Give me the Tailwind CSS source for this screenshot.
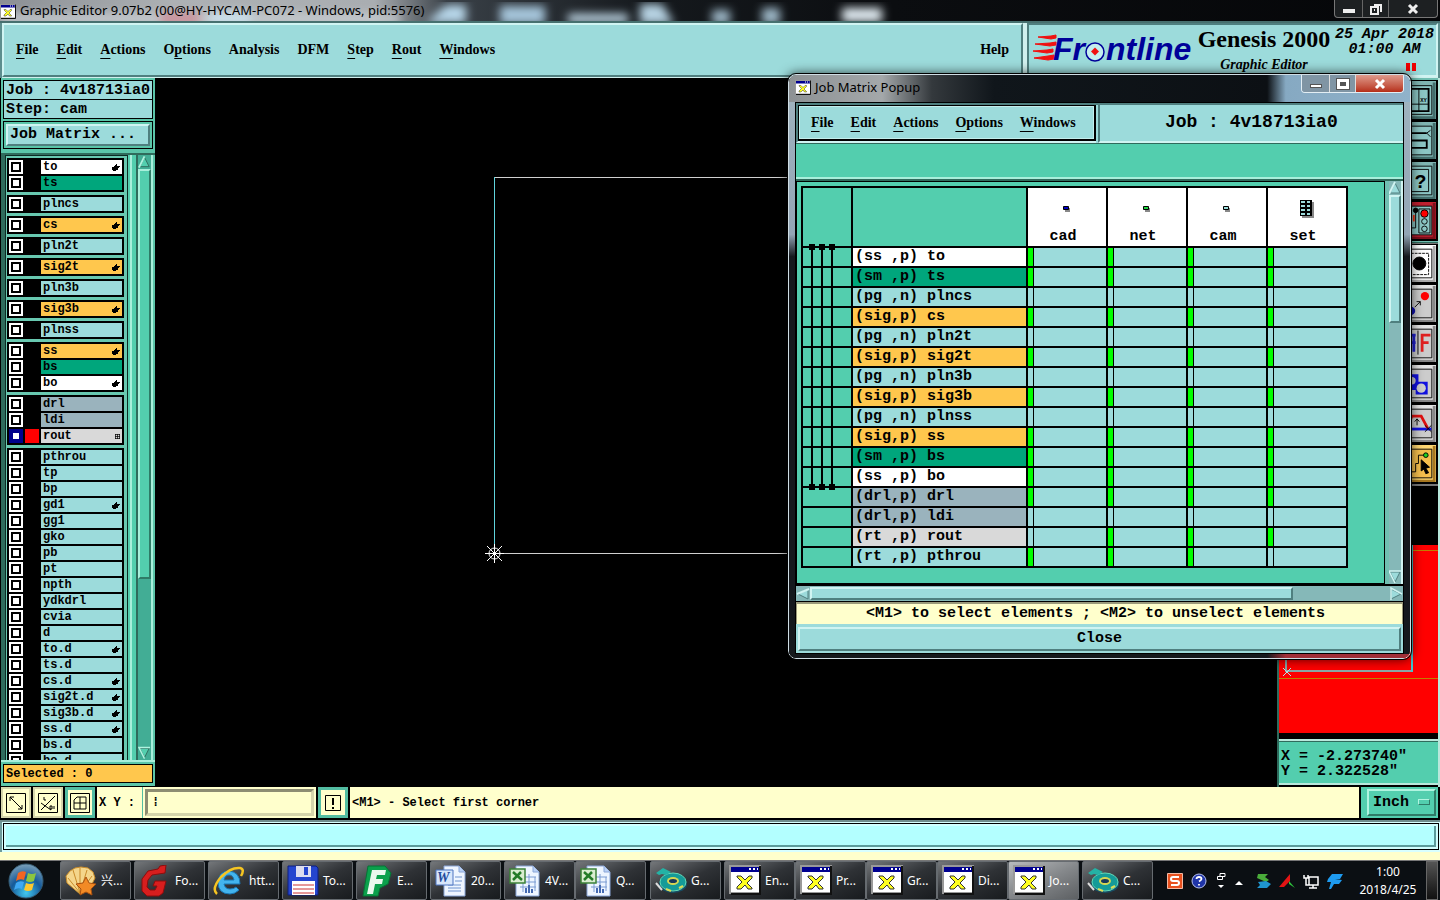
<!DOCTYPE html>
<html lang="en">
  <head>
    <meta charset="UTF-8" />
    <meta name="viewport" content="width=device-width, initial-scale=1.0" />
    <script src="https://cdn.jsdelivr.net/npm/@tailwindcss/browser@4"></script>
    <title>Graphic Editor</title>
  </head>
  <body
    class="relative flex h-screen flex-col overflow-hidden bg-black font-['Liberation_Mono',monospace] font-bold text-black"
  >
    <!-- shared icons -->
    <svg class="hidden">
      <symbol id="xwin" viewBox="0 0 32 32">
        <path d="M1 1h30v27H1z" fill="#fff" stroke="#999" stroke-width="2" />
        <path d="M31 1v28H2" fill="none" stroke="#111" stroke-width="2" />
        <path d="M2 2h28v5H2z" fill="#000090" />
        <path d="M20 3h2v2h-2zM24 3h2v2h-2zM28 3h1v2h-1z" fill="#fff" />
        <path
          d="M8 11h4l4 4 4-4h3v2l-5 5 5 5v1h-4l-3-4-4 4H8v-2l5-5-5-5z"
          fill="#ffff20"
          stroke="#333"
        />
      </symbol>
      <symbol id="hand" viewBox="0 0 8 7">
        <path d="M4 0h1v2h3v1H7v1H6v2H4v1H1V6H0V3h2V2h1V1h1z" />
      </symbol>
      <symbol id="word" viewBox="0 0 32 32">
        <path d="M9 1h15l6 6v24H9z" fill="#eef5ff" stroke="#8aa6d8" />
        <path d="M24 1v6h6" fill="#b9d0f5" stroke="#8aa6d8" />
        <path d="M13 20h13M13 23h13M13 26h13M20 12h7M20 16h7" stroke="#6f93cf" />
        <path d="M1 5h17v15H1z" fill="#d7e6fb" stroke="#4d75c1" />
        <text x="2" y="17" font-size="14" font-style="italic" font-weight="700" font-family="Liberation Serif, serif" fill="#234a9b">W</text>
      </symbol>
      <symbol id="excel" viewBox="0 0 32 32">
        <path d="M7 1h17l6 6v24H7z" fill="#eef5ff" stroke="#8aa6d8" />
        <path d="M24 1v6h6" fill="#b9d0f5" stroke="#8aa6d8" />
        <path d="M11 12h16M11 17h16M11 22h16M14 9v18M20 9v18M26 12v14" stroke="#7b9bd2" />
        <path d="M17 28v-5M20 28v-8M23 28v-4" stroke="#4469b0" stroke-width="2" />
        <path d="M1 4h15v14H1z" fill="#d9edd0" stroke="#3b8137" stroke-width="1.5" />
        <path d="M4 7l9 8M12 7l-8 8" stroke="#237b27" stroke-width="2.5" />
      </symbol>
      <symbol id="disc" viewBox="0 0 32 32">
        <ellipse cx="18" cy="19" rx="14" ry="9" fill="#174c63" />
        <ellipse cx="18" cy="17" rx="13" ry="9" fill="#159b98" stroke="#64dbb9" />
        <ellipse cx="18" cy="16" rx="6" ry="4" fill="#d6d653" />
        <ellipse cx="18" cy="16" rx="4" ry="2" fill="#18375a" />
        <path d="M1 8l7-5 8 4-5 3-4-1-3 1z" fill="#24b2a5" />
        <path d="M1 18l6 7" stroke="#ddd" stroke-width="2" />
        <path d="M11 24l5 2M24 23l4-2" stroke="#dddc58" stroke-width="2" />
      </symbol>
    </svg>

    <!-- window title -->
    <div
      class="relative flex h-[23px] shrink-0 items-start justify-between overflow-hidden border-b-2 border-[#47706f] bg-[linear-gradient(90deg,#8b8f94,#adb1b4_12%,#a9adb1_26%,#3a4148_31%,#15191d_45%,#0b0d10_62%,#050608)]"
    >
      <svg class="absolute inset-0 h-full w-full">
        <defs>
          <filter id="soft"><feGaussianBlur stdDeviation="5" /></filter>
        </defs>
        <g filter="url(#soft)">
          <path d="M0 14h400v9H0z" fill="#c9ced2" />
          <path d="M160 14h40v9h-40z" fill="#d78c98" />
          <path d="M210 12h40v12h-40z" fill="#cfe6f2" />
          <path d="M426 23l20-18h20v18z" fill="#b7d7ea" />
          <path d="M500 6h45v18h-45z" fill="#a5c5da" />
          <path d="M568 14h60v9h-60z" fill="#c3dceb" />
          <path d="M640 4h22l12 20h-34z" fill="#b6d2e2" />
          <path d="M712 10h18v14h-18zM762 8h18v16h-18z" fill="#9fb9c9" />
          <path d="M842 8h40v14h-40z" fill="#e3eef4" />
        </g>
      </svg>
      <div class="relative flex items-center gap-1 font-['Noto_Sans',sans-serif] text-[13px] font-normal">
        <svg class="mt-1 h-4 w-4"><use href="#xwin" /></svg>
        <h1 class="leading-5">Graphic Editor 9.07b2 (00@HY-HYCAM-PC072 - Windows, pid:5576)</h1>
      </div>
      <div class="relative mr-0.5 flex h-[18px] divide-x divide-[#666] rounded-b border border-t-0 border-[#777] bg-[#1d2022]">
        <button aria-label="Minimize" class="flex w-7 items-center justify-center pt-1">
          <span class="h-1 w-3 bg-[#eee]"></span>
        </button>
        <button aria-label="Restore" class="flex w-[26px] items-center justify-center">
          <svg class="h-3 w-3" fill="none" stroke="#eee" stroke-width="2"><path d="M4 2h7v7M1 4h7v7H1zM4 7h1" /></svg>
        </button>
        <button aria-label="Close window" class="flex w-12 items-center justify-center">
          <svg class="h-3 w-3" stroke="#eee" stroke-width="3"><path d="M2 2l8 8M10 2l-8 8" /></svg>
        </button>
      </div>
    </div>

    <!-- menu bar and product panel -->
    <header class="flex h-[55px] shrink-0 gap-1 border-x-2 border-[#5c8d8d] bg-[#d0f0ee] pb-px font-['Liberation_Serif',serif]">
      <nav
        class="flex flex-1 items-center gap-[18px] border-2 border-t-[#d0f4f2] border-r-[#4f7f7f] border-b-[#4f7f7f] border-l-[#d0f4f2] bg-[#9cdbdb] pr-3 pl-3 text-sm [&_u]:underline-offset-4"
      >
        <button><u>F</u>ile</button>
        <button><u>E</u>dit</button>
        <button><u>A</u>ctions</button>
        <button>O<u>p</u>tions</button>
        <button>Analysis</button>
        <button>DFM</button>
        <button><u>S</u>tep</button>
        <button><u>R</u>out</button>
        <button><u>W</u>indows</button>
        <button class="ml-auto">Help</button>
      </nav>
      <div
        class="flex w-[411px] items-start border-2 border-t-[#4f7f7f] border-r-[#d0f4f2] border-b-[#d0f4f2] border-l-[#4f7f7f] bg-[#9cdbdb]"
      >
        <svg class="mt-2 ml-1 h-9 w-[162px] shrink-0" viewBox="0 0 162 36">
          <path
            d="M5 4l13-1 5-1v3l-5 1zM2 11l15-1 6-1v3l-6 1zM0 18l14-1 6-1v3l-6 1zM1 25l14-2 6-1v4l-6 1z"
            fill="#f01010"
            stroke="#f01010"
          />
          <g font-family="Liberation Sans, sans-serif" font-size="32" font-weight="700" font-style="italic" fill="#000099">
            <text x="20" y="27">Fr</text>
            <text x="73" y="27">ntline</text>
          </g>
          <circle cx="62" cy="19" r="9" fill="#c4eeee" stroke="#000099" stroke-width="1.5" />
          <path d="M62 14.500l4 4-4 4-4-4z" fill="#f01010" />
        </svg>
        <div class="w-[138px] shrink-0 text-center">
          <p class="text-2xl leading-7 whitespace-nowrap">Genesis 2000</p>
          <p class="pt-0.5 text-sm italic">Graphic Editor</p>
        </div>
        <div class="flex-1 pt-0.5 text-center font-['Liberation_Mono',monospace] text-[15px] leading-[15px] whitespace-nowrap italic">
          <p>25 Apr 2018</p>
          <p>01:00 AM</p>
          <div class="mr-5 flex justify-end gap-0.5 pt-1.5">
            <span class="h-2 w-1 bg-[#f00000]"></span>
            <span class="h-2 w-1 bg-[#f00000]"></span>
          </div>
        </div>
      </div>
    </header>

    <main class="flex min-h-0 flex-1">
      <!-- layer list -->
      <aside class="flex w-[155px] shrink-0 flex-col border-l border-black bg-[#5bc5a9] pt-0.5">
        <p class="mx-0.5 h-5 border border-black bg-[#9cdbdb] pl-0.5 text-[15px] leading-5 whitespace-pre">Job : 4v18713ia0</p>
        <p class="mx-0.5 h-[19px] border border-t-0 border-black bg-[#9cdbdb] pl-0.5 text-[15px] leading-5">Step: cam</p>
        <div class="mx-0.5 mt-0.5 flex h-7 border border-black p-0.5">
          <button
            class="w-full border-2 border-t-[#d0f4f2] border-r-[#4f7f7f] border-b-[#4f7f7f] border-l-[#d0f4f2] bg-[#9cdbdb] pl-0.5 text-left text-[15px] leading-4"
          >
            Job Matrix ...
          </button>
        </div>
        <div class="mt-1 flex min-h-0 flex-1 border-t-2 border-l-4 border-[#2f6b5c]">
          <div class="w-[123px] overflow-hidden border border-b-0 border-[#0d2b24] bg-[#68c8b0] pt-0.5 pr-[3px] pl-px">
            <div id="layers" class="flex flex-col gap-[3px]"></div>
          </div>
          <div class="w-1 border-r-2 border-[#a8efdb] bg-[#53ceae]"></div>
          <div class="w-1.5 border-r-2 border-[#2f6b5c] bg-[#53ceae]"></div>
          <div class="mr-0.5 flex flex-1 flex-col border-r-2 border-[#a8efdb] bg-[#42ad95]">
            <svg class="h-3.5 w-full" viewBox="0 0 14 14">
              <path d="M0 0h14v14H0z" fill="#42ad95" />
              <path d="M7 2l5 10H2z" fill="#53ceae" stroke="#2f6b5c" />
              <path d="M7 1L1 13" stroke="#b0f4e0" stroke-width="2" />
            </svg>
            <div class="h-[410px] border-2 border-t-[#a8efdb] border-r-[#2f7b67] border-b-[#2f7b67] border-l-[#a8efdb] bg-[#53ceae]"></div>
            <svg class="mt-auto h-3.5 w-full" viewBox="0 0 14 14">
              <path d="M2 2h10L7 12z" fill="#53ceae" stroke="#2f6b5c" />
              <path d="M13 1H1l6 12" fill="none" stroke="#b0f4e0" stroke-width="1.5" />
            </svg>
          </div>
        </div>
        <div class="border-t-2 border-[#a8efdb] p-0.5">
          <p class="h-[19px] border border-black bg-[#ffc74d] pl-0.5 text-xs leading-[18px]">Selected : 0</p>
        </div>
        <div class="h-0.5 border-b border-black"></div>
      </aside>

      <!-- drawing area -->
      <section class="relative flex-1 bg-black">
        <svg class="absolute inset-0 h-full w-full" fill="none" shape-rendering="crispEdges">
          <path d="M339 99.5h760M339 475.5h760" stroke="#d0d0d0" />
          <path d="M339.5 99v377" stroke="#5fd3dc" />
          <g stroke="#fff" shape-rendering="auto">
            <circle cx="339.5" cy="475.5" r="5.5" />
            <path d="M330 475.5h19M339.500 466v19M332 468l15 15M347 468l-15 15" />
          </g>
        </svg>
      </section>

      <!-- tools, overview and coordinates -->
      <aside class="flex w-[163px] shrink-0 flex-col border-r-2 border-l-2 border-l-[#2f6b5c] border-r-[#b9e8dc]">
        <div class="flex flex-col items-end bg-[#71bfb2] pt-0.5 pb-px">
          <button aria-label="Coordinates" class="h-[41px] w-10 border border-r-2 border-b-2 border-black bg-[#7fb5b2]">
            <svg class="h-full w-full" viewBox="0 0 40 40" fill="none" stroke="#000">
              <path d="M38 1v38H1" stroke="#426d6b" stroke-width="3" />
              <path d="M5 4.500h30.500v31H5z" fill="#8cc6c4" />
              <path d="M8 8h24v24H8z" stroke-width="2" />
              <path d="M21.500 8v24M8 24.500h24" />
              <text x="23" y="22" font-size="6" fill="#000" stroke="none">XY</text>
            </svg>
          </button>
          <button aria-label="Measure" class="h-10 w-10 border border-r-2 border-b-2 border-black bg-[#7fb5b2]">
            <svg class="h-full w-full" viewBox="0 0 40 40" fill="none" stroke="#000">
              <path d="M38 1v38H1" stroke="#426d6b" stroke-width="3" />
              <path d="M5 4.500h30.500v31H5z" fill="#8cc6c4" />
              <path d="M8 12h22M8 20h22v8H8" stroke-width="2" />
              <path d="M30 12l4-3M30 12l4 4" />
            </svg>
          </button>
          <button aria-label="Help tool" class="h-10 w-10 border border-r-2 border-b-2 border-black bg-[#7fb5b2]">
            <svg class="h-full w-full" viewBox="0 0 40 40" fill="none" stroke="#000">
              <path d="M38 1v38H1" stroke="#426d6b" stroke-width="3" />
              <path d="M5 4.500h30.500v31H5z" fill="#8cc6c4" />
              <path d="M8 8h24v24H8z" />
              <text x="17" y="28" font-size="21" fill="#000" stroke="none">?</text>
            </svg>
          </button>
          <button aria-label="Control" class="h-10 w-10 border border-r-2 border-b-2 border-black bg-[#c02030]">
            <svg class="h-full w-full" viewBox="0 0 40 40" fill="none" stroke="#000">
              <path d="M38 1v38H1" stroke="#7c101c" stroke-width="3" />
              <path d="M5 4.500h30.500v31H5z" fill="#8cc6c4" />
              <path d="M21.500 7.500h12v26h-12z" />
              <circle cx="27.500" cy="12.500" r="4" fill="#f00" />
              <circle cx="27.500" cy="21" r="3" />
              <circle cx="27.500" cy="29" r="3" />
              <path d="M18 8v20h-6" />
              <circle cx="18" cy="9" r="2.500" fill="#000" />
              <path d="M16 14v7" stroke="#f03010" stroke-width="2" />
            </svg>
          </button>
        </div>
        <div class="flex flex-col items-end border-t border-[#2f6b5c] bg-[#777] pt-px pb-0.5">
          <button aria-label="Select area" class="h-10 w-10 border border-r-2 border-b-2 border-black bg-white">
            <svg class="h-full w-full" viewBox="0 0 40 40" fill="none" stroke="#000">
              <path d="M38 1v38H1" stroke="#aaa" stroke-width="3" />
              <path d="M5 4.500h30.500v31H5z" />
              <path d="M9 9h23v23H9z" stroke-dasharray="3 1" />
              <circle cx="22" cy="20" r="7" fill="#000" />
            </svg>
          </button>
          <button aria-label="Move" class="h-10 w-10 border border-r-2 border-b-2 border-black bg-[#e4e4e4]">
            <svg class="h-full w-full" viewBox="0 0 40 40" fill="none" stroke="#000">
              <path d="M38 1v38H1" stroke="#888" stroke-width="3" />
              <path d="M5 4.500h30.500v31H5z" fill="#ccc" />
              <circle cx="28" cy="12" r="4.500" fill="#f00" stroke="none" />
              <circle cx="13" cy="28" r="4.500" fill="#1010b0" stroke="none" />
              <path d="M17 24l6-6M19 18h4v4" />
            </svg>
          </button>
          <button aria-label="Mirror" class="h-10 w-10 border border-r-2 border-b-2 border-black bg-[#e4e4e4]">
            <svg class="h-full w-full" viewBox="0 0 40 40" fill="none" stroke="#000">
              <path d="M38 1v38H1" stroke="#888" stroke-width="3" />
              <path d="M5 4.500h30.500v31H5z" fill="#ccc" />
              <path d="M18 11H8M16 10v19M18 19h-8" stroke="#2020d0" stroke-width="3" />
              <path d="M20.500 6v26" />
              <path d="M34 11H25v18M25 19h7" stroke="#e02020" stroke-width="3" />
            </svg>
          </button>
          <button aria-label="Shapes" class="h-10 w-10 border border-r-2 border-b-2 border-black bg-[#e4e4e4]">
            <svg class="h-full w-full" viewBox="0 0 40 40" fill="none" stroke="#000">
              <path d="M38 1v38H1" stroke="#888" stroke-width="3" />
              <path d="M5 4.500h30.500v31H5z" fill="#ccc" />
              <path d="M9 10h12v8h10v14H18v-5H9z" fill="#1010e0" stroke="none" />
              <circle cx="24" cy="25" r="5" fill="#ccc" stroke="none" />
              <circle cx="14" cy="17" r="4" fill="#ccc" stroke="none" />
            </svg>
          </button>
          <button aria-label="Reshape" class="h-10 w-10 border border-r-2 border-b-2 border-black bg-[#e4e4e4]">
            <svg class="h-full w-full" viewBox="0 0 40 40" fill="none" stroke="#000">
              <path d="M38 1v38H1" stroke="#888" stroke-width="3" />
              <path d="M5 4.500h30.500v31H5z" fill="#ccc" />
              <path d="M6 26h29" stroke="#1010e0" stroke-width="3" />
              <path d="M8 25l6-13h10l7 13" stroke="#e01010" stroke-width="3" />
              <path d="M19.500 22v-7M17 18l2.500-3 2.500 3M28 22l7 7M35 22l-7 7" />
            </svg>
          </button>
          <button aria-label="Select line" class="h-10 w-10 border border-r-2 border-b-2 border-black bg-[#ffd873]">
            <svg class="h-full w-full" viewBox="0 0 40 40" fill="none" stroke="#000">
              <path d="M38 1v38H1" stroke="#a87820" stroke-width="3" />
              <path d="M5 4.500h30.500v31H5z" fill="#f5bf4d" />
              <path d="M8 29h10v-9h3v-9h6" />
              <circle cx="29" cy="11" r="2.500" fill="#20d020" />
              <path d="M24 16l9 8-4 1 3 5-3 1-2-5-3 2z" fill="#000" />
            </svg>
          </button>
        </div>
        <div class="flex flex-1 bg-black pt-[59px] pb-1.5">
          <svg class="h-full w-full bg-[#ff0000]" fill="none">
            <path d="M0 5.500h160M0 133.500h160" stroke="#c08000" />
            <path d="M7 0v126h127" stroke="#8aa7a7" stroke-width="2" />
            <path d="M133 0v127" stroke="#3fc7cf" stroke-width="2" />
            <path d="M4 123l8 8M12 123l-8 8" stroke="#b0e8e8" />
          </svg>
        </div>
        <div class="mb-0.5 h-[46px] border-t-2 border-b-2 border-t-[#b9e8dc] border-b-[#b9e8dc] bg-[#53ceae]">
          <div class="border-t border-[#2f6b5c] pt-[7px] pl-0.5 text-[15px] leading-[15px] whitespace-pre">X = -2.273740"
Y = 2.322528"</div>
        </div>
      </aside>
    </main>

    <!-- status row -->
    <footer class="flex h-[33px] shrink-0 items-stretch gap-0.5 border-b-2 border-black pl-px text-xs">
      <button aria-label="Corner snap" class="flex w-[30px] items-center justify-center bg-[#ffffcc] inset-ring-2 inset-ring-[#d5d5ab]">
        <svg class="h-5 w-5" fill="none" stroke="#000"><path d="M.5.5h19v19H.5zM4 4l12 12M4 8V4h4M16 12v4h-4" /></svg>
      </button>
      <button aria-label="Angle snap" class="flex w-[30px] items-center justify-center bg-[#ffffcc] inset-ring-2 inset-ring-[#d5d5ab]">
        <svg class="h-5 w-5" fill="none" stroke="#000"><path d="M.5.5h19v19H.5zM3 17L17 3M3 10l10 7M6 4v3h2M12 13h2v3h-2zM16 13v3" /></svg>
      </button>
      <button aria-label="Grid" class="flex w-[30px] items-center justify-center border-3 border-[#53bda2] bg-[#ffffcc]">
        <svg class="h-5 w-5" fill="none" stroke="#000"><path d="M.5.5h19v19H.5zM7 4h9v12H4V7zM4 10h12M10 4v12" /></svg>
      </button>
      <div class="flex w-[219px] items-stretch bg-[#ffffcc]">
        <label for="xy" class="w-[46px] shrink-0 border-r border-[#53bda2] pl-0.5 leading-8 whitespace-nowrap">X Y :</label>
        <input
          id="xy"
          type="text"
          class="m-0.5 min-w-0 flex-1 border-3 border-t-[#8d8d72] border-r-[#d5d5ab] border-b-[#d5d5ab] border-l-[#8d8d72] bg-[#ffffcc] pl-1 placeholder:text-black"
          placeholder="⁞"
        />
      </div>
      <button aria-label="Notice" class="flex w-[30px] items-center justify-center border-3 border-[#53bda2] bg-[#ffffcc]">
        <svg class="h-4 w-4" fill="none" stroke="#000"><path d="M.5.500h15v15H.5z" /><path d="M8 3v7M8 12v2" stroke-width="2" /></svg>
      </button>
      <p class="flex-1 bg-[#ffffcc] pl-0.5 leading-8">&lt;M1&gt; - Select first corner</p>
      <div class="relative mr-0.5 flex w-[77px] bg-[#53ceae] py-0.5 pr-0.5 pl-1.5">
        <select
          aria-label="Units"
          class="h-full w-full appearance-none border-2 border-t-[#b0f4e0] border-r-[#2f7b67] border-b-[#2f7b67] border-l-[#b0f4e0] pl-1 text-[15px]"
        >
          <option>Inch</option>
          <option>mm</option>
        </select>
        <span
          class="pointer-events-none absolute top-3 right-2 h-1.5 w-3 border border-t-[#b0f4e0] border-r-[#2f7b67] border-b-[#2f7b67] border-l-[#b0f4e0]"
        ></span>
      </div>
    </footer>
    <div class="h-10 shrink-0 border-t-2 border-[#708d8d] bg-[#ffffcc]">
      <div class="h-[30px] border-l-2 border-[#6d9a9a] bg-[#d8ffff] px-px py-px">
        <div class="h-[27px] border border-black bg-[#d0ffff] p-0.5">
          <div class="h-full border-r-2 border-b-2 border-[#5b9c9c] bg-[#b3ffff]"></div>
        </div>
      </div>
    </div>

    <!-- taskbar -->
    <nav
      class="flex h-10 shrink-0 items-stretch gap-[3px] border-t border-[#777] bg-[#0b0f13] font-['Noto_Sans','Noto_Sans_CJK_SC',sans-serif] text-xs font-normal text-white [&_a]:flex [&_a]:w-[71px] [&_a]:items-center [&_a]:gap-1 [&_a]:rounded-xs [&_a]:border [&_a]:border-[#666b70] [&_a]:bg-linear-155 [&_a]:from-[#74777a] [&_a]:via-[#2f3236] [&_a]:via-50% [&_a]:to-[#181b1e] [&_a]:pl-1 [&_a_svg]:h-8 [&_a_svg]:w-8 [&_a_svg]:shrink-0"
    >
      <button aria-label="Start" class="flex w-[57px] items-center pl-2">
        <svg class="h-9 w-9" viewBox="0 0 36 36">
          <defs>
            <radialGradient id="orb" cx=".5" cy=".85" r=".9">
              <stop offset="0" stop-color="#42c8ee" />
              <stop offset=".5" stop-color="#155a9a" />
              <stop offset="1" stop-color="#88a9bd" />
            </radialGradient>
          </defs>
          <circle cx="18" cy="18" r="17" fill="url(#orb)" stroke="#355c74" />
          <path d="M10 10q4-3 8-1l-2 8q-4-2-8 1z" fill="#f26522" />
          <path d="M20 10q4 2 8 0l-2 8q-4 2-8 0z" fill="#8cc63f" />
          <path d="M8 20q4-3 8-1l-2 7q-4-2-8 1z" fill="#3fa9f5" />
          <path d="M18 20q4 2 8 0l-2 7q-4 2-8 0z" fill="#fdc82f" />
        </svg>
      </button>
      <a href="#">
        <svg viewBox="0 0 32 32">
          <path d="M15 29L2 18l-1-7 4-5 5-3 6-1 7 1 5 4 2 6-4 8z" fill="#f4d68b" stroke="#c98c2a" />
          <path d="M15 28L3 13M15 28L8 5M15 28V3M15 28l7-23M15 28l12-17" stroke="#c98c2a" />
          <path d="M21 12l3 6 7 1-5 5 1 6-6-3-6 3 1-6-5-5 7-1z" fill="#f28a25" stroke="#a8500f" />
        </svg>
        兴...
      </a>
      <a href="#">
        <svg viewBox="0 0 32 32">
          <path d="M27 0l-1 8-13 2-4 5-1 7 3 3h5l2-4h-4l2-5h11l-3 12-4 3H8l-5-5V14l6-8 10-2 2-3z" fill="#d81e1e" stroke="#8b0d0d" />
        </svg>
        Fo...
      </a>
      <a href="#">
        <svg viewBox="0 0 32 32">
          <path d="M27 19H11q1 5 6 5 4 0 6-2l3 3q-4 4-9 4Q5 29 5 17 6 6 16 6q11 1 11 13zM11 15h10q-1-5-5-5t-5 5z" fill="#43b4ee" stroke="#1876b4" />
          <path d="M4 29Q-2 24 8 12 18 2 27 3q5 1 1 8" fill="none" stroke="#f6c522" stroke-width="2.500" />
        </svg>
        htt...
      </a>
      <a href="#">
        <svg viewBox="0 0 32 32">
          <path d="M1 1h28l2 2v27H1z" fill="#2545cf" stroke="#0d1f80" />
          <path d="M9 1h15v11H9z" fill="#dde" />
          <path d="M17 2h4v8h-4z" fill="#2545cf" />
          <path d="M5 16h23v14H5z" fill="#fff" />
          <path d="M6 20h21M6 24h21M6 28h21" stroke="#c33" />
        </svg>
        To...
      </a>
      <a href="#">
        <svg viewBox="0 0 32 32">
          <path d="M7 1h17l6 7-3 11-8 4-2 8H2z" fill="#0ba04c" stroke="#067335" />
          <path d="M11 5h14l-1 5h-8l-1 4h7l-1 5h-7l-2 10H6z" fill="#eaf8ee" />
        </svg>
        E...
      </a>
      <a href="#"><svg><use href="#word" /></svg>20...</a>
      <div class="mr-px flex">
        <a href="#"><svg><use href="#excel" /></svg>4V...</a>
        <a href="#"><svg><use href="#excel" /></svg>Q...</a>
      </div>
      <a href="#"><svg><use href="#disc" /></svg>G...</a>
      <div class="flex">
        <a href="#"><svg><use href="#xwin" /></svg>En...</a>
        <a href="#"><svg><use href="#xwin" /></svg>Pr...</a>
        <a href="#"><svg><use href="#xwin" /></svg>Gr...</a>
        <a href="#"><svg><use href="#xwin" /></svg>Di...</a>
        <a href="#" class="from-[#b9bbbd]! via-[#85888b]! to-[#5d6063]!"><svg><use href="#xwin" /></svg>Jo...</a>
      </div>
      <a href="#"><svg><use href="#disc" /></svg>C...</a>
      <div class="ml-auto flex items-center gap-2 pr-1">
        <svg class="h-4 w-4" viewBox="0 0 16 16">
          <path d="M.5.5h15v15H.5z" fill="#e8501e" stroke="#f3b9a4" />
          <path d="M12 4H6Q4 4 4 6t2 2h4q2 0 2 2t-2 2H4" fill="none" stroke="#fff" stroke-width="2" />
        </svg>
        <svg class="h-4 w-4" viewBox="0 0 16 16">
          <circle cx="8" cy="8" r="7" fill="#2035a8" stroke="#b9c3f0" />
          <path d="M5.500 6q0-2 2.500-2t2.500 2q0 1-2.500 2.500M8 11v1.500" fill="none" stroke="#fff" stroke-width="1.800" />
        </svg>
        <svg class="h-5 w-3" viewBox="0 0 12 20" fill="none" stroke="#fff">
          <path d="M5 2.500h5v3H5zM2.500 5.500h5v3h-5z" />
          <path d="M3 14h6l-3 3z" fill="#fff" stroke="none" />
        </svg>
        <svg class="h-4 w-2" viewBox="0 0 8 16"><path d="M0 12l4-4 4 4z" fill="#fff" /></svg>
        <svg class="ml-1 h-4 w-4" viewBox="0 0 16 16">
          <path d="M3 1h10l-3 3 4 3-3 2-9-4z" fill="#4aac3a" />
          <path d="M3 9l8-1 5 3-4 4H2l3-3z" fill="#1f95cf" />
        </svg>
        <svg class="h-4 w-4" viewBox="0 0 16 16">
          <path d="M11 1v7L5 14H0z" fill="#e31414" />
          <path d="M10 8l6 7-6-4z" fill="#2dc43c" />
        </svg>
        <svg class="h-4 w-4" viewBox="0 0 16 16" fill="none" stroke="#fff" stroke-width="1.500">
          <path d="M6 4h9v8H6zM10 12v3M6 15h8M1 2v3h4V2M3 5v7h3" />
        </svg>
        <svg class="h-4 w-4" viewBox="0 0 16 16"><path d="M5 1h11l-3 5H8l7 1-3 4H7l-3 5H2l2-7H0l1-3z" fill="#1e9bf0" /></svg>
        <time class="ml-1.5 w-[62px] text-center leading-[18px]">1:00<br />2018/4/25</time>
      </div>
      <button aria-label="Show desktop" class="mr-0.5 w-3 border border-[#666] bg-linear-to-b from-[#555] to-[#111]"></button>
    </nav>

    <!-- job matrix window -->
    <section
      class="absolute top-[74px] right-[29px] flex w-[623px] flex-col overflow-hidden rounded-lg border border-[#cfdde4] shadow-[0_0_12px_rgba(0,0,0,.8)] outline-1 outline-black"
    >
      <div class="flex h-[27px] items-start justify-between bg-[linear-gradient(90deg,#8d9194,#a4a8aa_15%,#34393d_23%,#10161b_33%,#0c1014_77%,#86a9c2_80%,#90b2ca)] pl-1.5">
        <div class="flex items-center gap-1 pt-0.5 font-['Noto_Sans',sans-serif] text-[13px] font-normal">
          <svg class="mt-0.5 h-4 w-4"><use href="#xwin" /></svg>
          <h2 class="leading-5">Job Matrix Popup</h2>
        </div>
        <div class="mr-1.5 flex h-[18px] divide-x divide-[#ddd] overflow-hidden rounded-b border border-t-0 border-[#e3eef4]">
          <button aria-label="Minimize popup" class="flex w-7 items-center justify-center bg-[#8095a4] pt-1">
            <span class="h-1 w-3 border border-[#555] bg-white"></span>
          </button>
          <button aria-label="Maximize popup" class="flex w-[26px] items-center justify-center bg-[#8095a4]">
            <span class="h-2.5 w-3 border-3 border-white bg-[#555] outline-1 outline-[#555]"></span>
          </button>
          <button aria-label="Close popup" class="flex w-[47px] items-center justify-center bg-linear-to-b from-[#de9a8c] to-[#b52c17]">
            <svg class="h-3 w-3" stroke="#fff" stroke-width="3"><path d="M2 2l8 8M10 2l-8 8" /></svg>
          </button>
        </div>
      </div>

      <div class="bg-[linear-gradient(180deg,#9fb2be,#93a5b5_24%,#15191d_28%,#15191d)] px-1.5">
        <div class="border border-black bg-[#9cdbdb]">
          <div class="flex h-10 border-t-2 border-[#4f7f7f] text-sm">
            <div class="border-2 border-t-0 border-r-0 border-[#4f7f7f] border-b-[#d0f4f2]">
              <nav
                class="flex h-9 items-center gap-[17px] border border-r-2 border-b-2 border-black bg-[#9cdbdb] pr-[18px] pl-3 font-['Liberation_Serif',serif] inset-ring-1 inset-ring-[#c4eeec] [&_u]:underline-offset-4"
              >
                <button><u>F</u>ile</button>
                <button><u>E</u>dit</button>
                <button><u>A</u>ctions</button>
                <button><u>O</u>ptions</button>
                <button><u>W</u>indows</button>
              </nav>
            </div>
            <p class="ml-0.5 flex-1 border-b-2 border-l-2 border-[#4f7f7f] border-b-[#d0f4f2] text-center text-lg leading-[34px] whitespace-pre">Job : 4v18713ia0</p>
          </div>
          <div class="h-9 border-t border-b-2 border-t-[#2f6b5c] border-b-[#a8efdb] bg-[#53ceae]"></div>

          <div class="flex border-t-2 border-[#2f6b5c]">
            <div class="relative flex-1 border border-black bg-[#53ceae] pt-1 pb-[15px] pl-1">
              <table class="w-[547px] table-fixed border-collapse text-[15px] leading-[18px]">
                <colgroup>
                  <col class="w-[50px]" />
                  <col class="w-[175px]" />
                  <col class="w-20" />
                  <col class="w-20" />
                  <col class="w-20" />
                  <col class="w-20" />
                </colgroup>
                <thead>
                  <tr class="h-[60px] [&>th]:border-2 [&>th]:border-black [&>th]:p-0 [&>th]:align-bottom">
                    <th></th>
                    <th></th>
                    <th class="bg-white">
                      <svg class="mx-auto mb-3 h-4 w-2"><path d="M2 8h5v4H2z" fill="#888" /><path d="M.5 6.500h5v3h-5z" fill="#0000c0" stroke="#000" /></svg>
                      <span class="pr-2">cad</span>
                    </th>
                    <th class="bg-white">
                      <svg class="mx-auto mb-3 h-4 w-2"><path d="M2 8h5v4H2z" fill="#888" /><path d="M.5 6.500h5v3h-5z" fill="#20d040" stroke="#000" /></svg>
                      <span class="pr-2">net</span>
                    </th>
                    <th class="bg-white">
                      <svg class="mx-auto mb-3 h-4 w-2"><path d="M2 8h5v4H2z" fill="#888" /><path d="M.5 6.500h5v3h-5z" fill="#9cdbdb" stroke="#000" /></svg>
                      <span class="pr-2">cam</span>
                    </th>
                    <th class="bg-white">
                      <svg class="mx-auto mb-2.5 h-[18px] w-3.5">
                        <path d="M2 2h12v16H2z" fill="#888" />
                        <path d="M0 0h12v16H0z" />
                        <path d="M1 2h4M7 2h3M1 6h4M7 6h3M1 10h4M7 10h3M1 14h4M7 14h3" stroke="#9cdbdb" stroke-width="2" />
                      </svg>
                      <span class="pr-2">set</span>
                    </th>
                  </tr>
                </thead>
                <tbody id="matrix"></tbody>
              </table>
              <!-- drill span lines -->
              <svg class="absolute top-[60px] left-3 h-[250px] w-7">
                <path d="M3 5v240M13 5v240M23 5v240" stroke="#000" stroke-width="2" />
                <path d="M0 2h6v6H0zM10 2h6v6h-6zM20 2h6v6h-6zM0 242h6v6H0zM10 242h6v6h-6zM20 242h6v6h-6z" />
              </svg>
            </div>
            <div class="flex w-[18px] flex-col border-r-2 border-l-4 border-l-[#71bfb2] border-r-[#d0f4f2] bg-[#85b8b8]">
              <svg class="h-3.5 w-full" viewBox="0 0 12 14">
                <path d="M6 2l5 10H1z" fill="#9cdbdb" stroke="#4f7f7f" />
                <path d="M6 1L0 13" stroke="#d0f4f2" stroke-width="2" />
              </svg>
              <div class="h-32 border-2 border-t-[#d0f4f2] border-r-[#4f7f7f] border-b-[#4f7f7f] border-l-[#d0f4f2] bg-[#9cdbdb]"></div>
              <svg class="mt-auto h-3.5 w-full" viewBox="0 0 12 14">
                <path d="M1 2h10L6 12z" fill="#9cdbdb" stroke="#4f7f7f" />
                <path d="M12 1H0l6 12" fill="none" stroke="#d0f4f2" stroke-width="1.500" />
              </svg>
            </div>
          </div>

          <div class="flex h-[18px] border-y border-t-2 border-black bg-[#85b8b8] py-px">
            <svg class="h-3.5 w-3.5" viewBox="0 0 14 12">
              <path d="M2 6l10-5v10z" fill="#9cdbdb" stroke="#4f7f7f" />
              <path d="M1 6l12-5" stroke="#d0f4f2" stroke-width="2" />
            </svg>
            <div class="w-[483px] border-2 border-t-[#d0f4f2] border-r-[#4f7f7f] border-b-[#4f7f7f] border-l-[#d0f4f2] bg-[#9cdbdb]"></div>
            <svg class="ml-auto h-3.5 w-3.5" viewBox="0 0 14 12">
              <path d="M12 6L2 1v10z" fill="#9cdbdb" stroke="#4f7f7f" />
              <path d="M2 12V0l11 6" fill="none" stroke="#d0f4f2" stroke-width="1.500" />
            </svg>
          </div>
          <p class="h-[22px] border-x border-t-2 border-[#9a9a7c] bg-[#ffffcc] pr-2 text-center text-[15px] leading-5 whitespace-nowrap">
            &lt;M1&gt; to select elements ; &lt;M2&gt; to unselect elements
          </p>
          <div class="p-0.5">
            <button
              class="h-6 w-full border-2 border-t-[#d0f4f2] border-r-[#4f7f7f] border-b-[#4f7f7f] border-l-[#d0f4f2] text-[15px] leading-5"
            >
              Close
            </button>
          </div>
        </div>
      </div>
      <div class="h-1 bg-[linear-gradient(90deg,#15191d_77%,#a03038_80%)]"></div>
    </section>

    <script>
      const fills = {
        white: "bg-white",
        mask: "bg-[#00a67c]",
        signal: "bg-[#ffc74d]",
        plane: "bg-[#9cdbdb]",
        drill: "bg-[#9ab3bd]",
        rout: "bg-[#d9d9d9]",
      };

      // [name, fill, hand mark]
      const groups = [
        [["to", "white", 1], ["ts", "mask"]],
        [["plncs", "plane"]],
        [["cs", "signal", 1]],
        [["pln2t", "plane"]],
        [["sig2t", "signal", 1]],
        [["pln3b", "plane"]],
        [["sig3b", "signal", 1]],
        [["plnss", "plane"]],
        [["ss", "signal", 1], ["bs", "mask"], ["bo", "white", 1]],
        [["drl", "drill"], ["ldi", "drill"], ["rout", "rout"]],
        [
          ["pthrou", "plane"], ["tp", "plane"], ["bp", "plane"], ["gd1", "plane", 1],
          ["gg1", "plane"], ["gko", "plane"], ["pb", "plane"], ["pt", "plane"],
          ["npth", "plane"], ["ydkdrl", "plane"], ["cvia", "plane"], ["d", "plane"],
          ["to.d", "plane", 1], ["ts.d", "plane"], ["cs.d", "plane", 1],
          ["sig2t.d", "plane", 1], ["sig3b.d", "plane", 1], ["ss.d", "plane", 1],
          ["bs.d", "plane"], ["bo.d", "plane"],
        ],
      ];

      document.getElementById("layers").innerHTML = groups
        .map((group) => {
          const rows = group
            .map(([name, fill, hand]) => {
              const active = name === "rout";
              let mark = "";
              if (hand)
                mark = '<svg class="h-[7px] w-2" shape-rendering="crispEdges"><use href="#hand" /></svg>';
              if (active)
                mark =
                  '<svg class="h-[5px] w-[5px]" stroke="#000" fill="none"><path d="M0 .5h5M0 2.500h5M0 4.500h5M.5 0v5M2.500 0v5M4.500 0v5" stroke-width=".7" /></svg>';
              return `<label class="flex h-3.5">
                <input type="checkbox" ${active ? "checked" : ""}
                  class="h-3.5 w-3.5 appearance-none border-2 border-white bg-white shadow-[inset_0_0_0_2px_#000] checked:border-[#00008c] checked:shadow-[inset_0_0_0_2px_#00008c]" />
                <span class="mx-0.5 w-3.5 ${active ? "bg-[#ff0000]" : "bg-black"}"></span>
                <span class="flex flex-1 items-center justify-between pr-0.5 pl-0.5 text-xs leading-3.5 ${fills[fill]}">${name}${mark}</span>
              </label>`;
            })
            .join("");
          return `<div class="flex flex-col gap-0.5 bg-black p-0.5">${rows}</div>`;
        })
        .join("");

      // [label, fill, filled cells in cad/net/cam/set order]
      const matrix = [
        ["(ss ,p) to", "white", "1111"],
        ["(sm ,p) ts", "mask", "1111"],
        ["(pg ,n) plncs", "plane", "0000"],
        ["(sig,p) cs", "signal", "1111"],
        ["(pg ,n) pln2t", "plane", "0000"],
        ["(sig,p) sig2t", "signal", "1111"],
        ["(pg ,n) pln3b", "plane", "0000"],
        ["(sig,p) sig3b", "signal", "1111"],
        ["(pg ,n) plnss", "plane", "0000"],
        ["(sig,p) ss", "signal", "1111"],
        ["(sm ,p) bs", "mask", "1111"],
        ["(ss ,p) bo", "white", "1111"],
        ["(drl,p) drl", "drill", "1111"],
        ["(drl,p) ldi", "drill", "0000"],
        ["(rt ,p) rout", "rout", "0111"],
        ["(rt ,p) pthrou", "plane", "1110"],
      ];

      document.getElementById("matrix").innerHTML = matrix
        .map(([label, fill, cells]) => {
          const tds = [...cells]
            .map(
              (c) =>
                `<td class="border-2 border-black bg-[#9cdbdb] p-0"><div class="h-[18px] w-1.5 border-r border-black ${c === "1" ? "bg-[#00ff00]" : ""}"></div></td>`
            )
            .join("");
          return `<tr class="h-5"><td class="border-2 border-black p-0"></td><td class="border-2 border-black p-0 pl-0.5 whitespace-pre ${fills[fill]}">${label}</td>${tds}</tr>`;
        })
        .join("");
    </script>
  </body>
</html>
